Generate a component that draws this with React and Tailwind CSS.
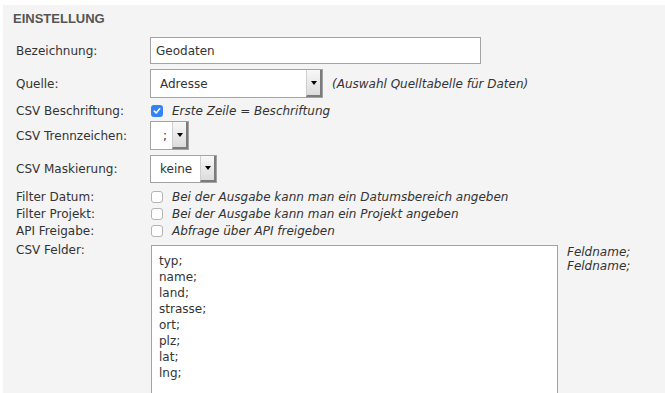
import React from "react";

const font = { fontFamily: '"DejaVu Sans", Verdana, sans-serif' };

function Arrow() {
  return <div className="w-0 h-0 border-l-[3px] border-r-[3px] border-t-[4px] border-l-transparent border-r-transparent border-t-black" />;
}

function Select({ value, size, pad }) {
  return (
    <div className={`flex bg-white border border-[#a3a3a3] ${size}`}>
      <div className={`flex-1 flex items-center ${pad}`}>{value}</div>
      <div className="w-[16px] flex items-center justify-center bg-gradient-to-b from-[#f8f8f8] to-[#dcdcdc] border-l border-[#cfcfcf] border-r-2 border-b-2 border-r-[#7b7b7b] border-b-[#7b7b7b]">
        <Arrow />
      </div>
    </div>
  );
}

function Check({ checked }) {
  if (checked) {
    return (
      <div className="w-[12px] h-[12px] rounded-[3px] bg-[#3283f6] flex items-center justify-center">
        <svg width="8" height="8" viewBox="0 0 8 8" fill="none" stroke="white" strokeWidth="1.6" strokeLinecap="round" strokeLinejoin="round">
          <polyline points="1.3 4.2 3.2 6 6.7 1.8" />
        </svg>
      </div>
    );
  }
  return <div className="w-[12px] h-[12px] rounded-[3px] bg-white border border-[#b4b4b4]" />;
}

function Row({ label, className, children }) {
  return (
    <div className={`flex items-center ${className}`}>
      <div className="w-[134px] shrink-0">{label}</div>
      {children}
    </div>
  );
}

function CheckRow({ label, checked, text }) {
  return (
    <Row label={label} className="h-[17px]">
      <div className="ml-[1px]"><Check checked={checked} /></div>
      <span className="ml-[9px] italic">{text}</span>
    </Row>
  );
}

export default function App() {
  const fields = ["typ;", "name;", "land;", "strasse;", "ort;", "plz;", "lat;", "lng;"];
  return (
    <div className="h-screen overflow-hidden bg-white">
      <div className="mt-[5px] ml-[3px] h-[400px] bg-[#f4f4f4] text-[12px] text-[#333]" style={font}>
        <div className="pt-[6px] pl-[10px] text-[13px] leading-[16px] font-bold text-[#555] font-['Liberation_Sans',Arial,sans-serif]">
          EINSTELLUNG
        </div>
        <div className="pl-[13px] flex flex-col">
          <Row label="Bezeichnung:" className="mt-[10px]">
            <div className="w-[331px] h-[27px] bg-white border border-[#a3a3a3] flex items-center pl-[5px]">Geodaten</div>
          </Row>
          <Row label="Quelle:" className="mt-[5px]">
            <Select value="Adresse" size="w-[173px] h-[29px]" pad="pl-[9px]" />
            <span className="ml-[9px] italic">(Auswahl Quelltabelle für Daten)</span>
          </Row>
          <div className="mt-[4px]">
            <CheckRow label="CSV Beschriftung:" checked text="Erste Zeile = Beschriftung" />
          </div>
          <Row label="CSV Trennzeichen:" className="mt-[2px]">
            <Select value=";" size="w-[39px] h-[29px]" pad="pl-[12px]" />
          </Row>
          <Row label="CSV Maskierung:" className="mt-[5px]">
            <Select value="keine" size="w-[67px] h-[28px]" pad="pl-[9px]" />
          </Row>
          <div className="mt-[5px] flex flex-col">
            <CheckRow label="Filter Datum:" text="Bei der Ausgabe kann man ein Datumsbereich angeben" />
            <CheckRow label="Filter Projekt:" text="Bei der Ausgabe kann man ein Projekt angeben" />
            <CheckRow label="API Freigabe:" text="Abfrage über API freigeben" />
          </div>
          <div className="mt-[6px] flex items-start">
            <div className="w-[135px] shrink-0 -mt-[2px] leading-[15px]">CSV Felder:</div>
            <div className="w-[407px] h-[160px] bg-white border border-[#a3a3a3] pt-[7px] pl-[7px] leading-[16px]">
              {fields.map((f) => (
                <div key={f}>{f}</div>
              ))}
            </div>
            <div className="ml-[9px] italic leading-[14px]">
              <div>Feldname;</div>
              <div>Feldname;</div>
            </div>
          </div>
        </div>
      </div>
    </div>
  );
}
